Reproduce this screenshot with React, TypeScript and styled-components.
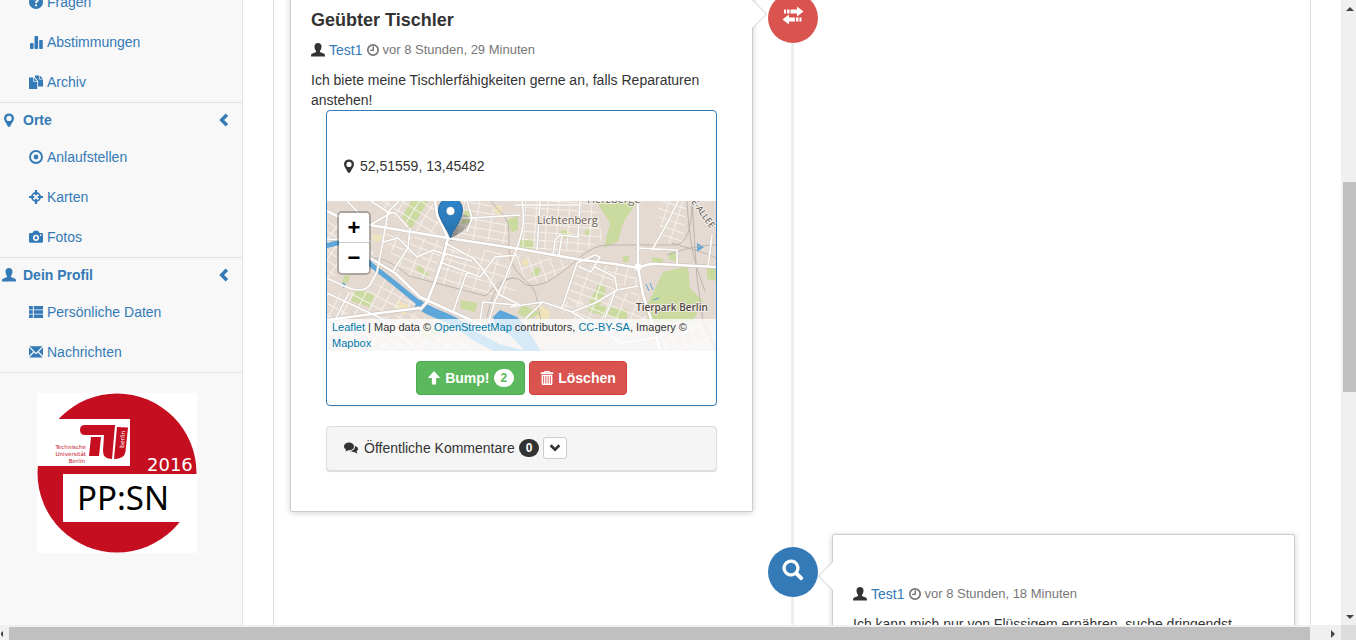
import React from 'react';
import styled, { createGlobalStyle, css } from 'styled-components';

const GlobalStyle = createGlobalStyle`
  *, *::before, *::after { box-sizing: border-box; }
  body {
    margin: 0;
    background: #fff;
    color: #333;
    font: 14px/20px "Liberation Sans", Arial, sans-serif;
  }
  a { color: #337ab7; text-decoration: none; }
  h4, p, ul { margin: 0; padding: 0; }
  ul { list-style: none; }
`;

/* ---------- icons ---------- */

type IconName =
  | 'question' | 'stats' | 'duplicate' | 'marker' | 'record' | 'screenshot' | 'camera' | 'user'
  | 'list' | 'envelope' | 'left' | 'down' | 'time' | 'up' | 'trash' | 'comments';

const glyphs: Record<IconName, React.ReactNode> = {
  question: (
    <path fillRule="evenodd" d="M7 0a7 7 0 1 1 0 14A7 7 0 0 1 7 0ZM4.4 5.2h2c0-.7.3-1 .8-1 .4 0 .7.2.7.6 0 .9-1.8 1.100-1.800 3.200h1.900c0-1.200 2-1.500 2-3.400C10 3 8.800 2.300 7.300 2.300c-1.800 0-2.900 1-2.900 2.900ZM6.100 9.200v2h1.900v-2Z" />
  ),
  stats: (
    <>
      <rect x="1" y="8" width="3.600" height="6" rx=".8" />
      <rect x="5.500" y="1" width="3.600" height="13" rx=".8" />
      <rect x="10.200" y="5" width="3.600" height="9" rx=".8" />
    </>
  ),
  duplicate: (
    <>
      <path d="M0 2.500h4.300v4.200h3.900V14H.5a.5.5 0 0 1-.5-.5Z" />
      <path d="M5.100 2.700 8 5.900H5.100Z" />
      <path d="M6 .5h3.900v4h4.100v7H9.100V5.700L6 2.300Z" />
      <path d="M10.700.5 14 3.700h-3.300Z" />
    </>
  ),
  marker: (
    <path fillRule="evenodd" d="M7 .4a5 5 0 0 1 5 5c0 2.600-2.500 4.600-3.300 7.200C8.400 13.500 7.700 13.900 7 13.900s-1.400-.4-1.700-1.300C4.500 10 2 8 2 5.400a5 5 0 0 1 5-5Zm0 2.400a2.600 2.600 0 1 0 0 5.200 2.600 2.600 0 0 0 0-5.200Z" />
  ),
  record: (
    <>
      <circle cx="7" cy="7" r="6" fill="none" stroke="currentColor" strokeWidth="1.900" />
      <circle cx="7" cy="7" r="2.400" />
    </>
  ),
  screenshot: (
    <>
      <circle cx="7" cy="7" r="4.100" fill="none" stroke="currentColor" strokeWidth="1.800" />
      <path d="M5.900 0h2.200v5.300H5.900ZM5.900 8.700h2.200V14H5.900ZM0 5.900h5.300v2.200H0ZM8.700 5.900H14v2.200H8.700Z" />
    </>
  ),
  camera: (
    <path fillRule="evenodd" d="M1.300 3.100h2L4.700 1.300Q5 .8 5.600.8h2.800q.6 0 .9.5l1.400 1.800h2q1.300 0 1.300 1.300v7.100q0 1.200-1.300 1.200H1.300Q0 12.700 0 11.500V4.400q0-1.300 1.300-1.300ZM7 4.700a3.100 3.100 0 1 0 0 6.200 3.100 3.100 0 0 0 0-6.200Zm0 1.600a1.500 1.500 0 1 1 0 3 1.500 1.500 0 0 1 0-3Zm4-1.700v1.300h1.300V4.600Z" />
  ),
  user: (
    <path d="M7 0c2.200 0 3.500 1.500 3.500 3.500 0 1.800-.6 3.300-1.500 4.200-.3.900.1 1.400 1 1.800l2.600 1.100c1 .4 1.400.9 1.400 2.900H0c0-2 .4-2.500 1.400-2.900L4 9.500c.9-.4 1.300-.9 1-1.800C4.100 6.800 3.500 5.300 3.500 3.500 3.500 1.500 4.800 0 7 0Z" />
  ),
  list: <path d="M0 1h3.800v3.400H0ZM4.800 1H14v3.400H4.800ZM0 5.300h3.800v3.400H0ZM4.800 5.300H14v3.400H4.800ZM0 9.600h3.800V13H0ZM4.800 9.600H14V13H4.800Z" />,
  envelope: (
    <path d="M.4 1.300h13.200L7 7.700ZM0 2.500l4.200 4.200L0 10.700ZM14 2.500v8.200L9.800 6.700ZM5.100 7.600 7 9.400l1.900-1.800 4.700 4.900H.4Z" />
  ),
  left: <path d="m9.600.4 2.500 2.500L8.100 7l4 4.100-2.500 2.500L3.300 7Z" />,
  down: <path d="m.8 4.900 2.200-2.200 4 4 4-4 2.200 2.200L7 11Z" />,
  time: (
    <>
      <circle cx="7" cy="7" r="5.200" fill="none" stroke="currentColor" strokeWidth="1.700" />
      <path d="M6.600 3.200h1.400V8H4V6.700h2.600Z" />
    </>
  ),
  up: <path d="m7 0 6.200 7H9.100v6.500H4.900V7H.8Z" />,
  trash: (
    <>
      <path fillRule="evenodd" d="M4 1.300Q4 0 5.200 0h3.600Q10 0 10 1.300h3.300v1.600H.7V1.300ZM5.200 1.300h3.600V.9H5.200Z" />
      <path fillRule="evenodd" d="M1.600 3.700h10.800V12.800q0 1.200-1.200 1.200H2.800q-1.200 0-1.200-1.200ZM3.200 4.900v7.500h.9V4.900ZM5.400 4.900v7.500h.9V4.900ZM7.700 4.900v7.500h.9V4.900ZM9.900 4.900v7.500h.9V4.900Z" />
    </>
  ),
  comments: (
    <>
      <path d="M5 1.600c3 0 5 1.700 5 3.900S8 9.300 5 9.300l-.8-.1C3.300 10 2.200 10.300 1.200 10.400c.5-.5.900-1.200.9-1.900C.8 7.800 0 6.800 0 5.500 0 3.300 2 1.600 5 1.600Z" />
      <path d="M11 5c1.800.3 3 1.500 3 3 0 .9-.6 1.700-1.500 2.300.1.800.5 1.400 1 1.900-1.200 0-2.300-.5-3-1.300-2 .2-3.900-.1-4.900-.8C9 10 11.200 8 11 5Z" />
    </>
  ),
};

const Glyph = styled.svg`
  flex: none;
  width: 14px;
  height: 14px;
  fill: currentColor;
`;

const Icon = ({ name }: { name: IconName }) => (
  <Glyph viewBox="0 0 14 14" aria-hidden="true">{glyphs[name]}</Glyph>
);

/* ---------- window frame ---------- */

const Window = styled.div`
  display: grid;
  grid-template: minmax(0, 1fr) 15px / minmax(0, 1fr) 15px;
  height: 100vh;
  overflow: hidden;
`;

const Viewport = styled.div`
  display: grid;
  grid-template-columns: 243px minmax(0, 1fr);
  overflow: hidden;
`;

const ScrollTrack = styled.div<{ $horizontal?: boolean }>`
  display: flex;
  flex-direction: ${p => (p.$horizontal ? 'row' : 'column')};
  padding: ${p => (p.$horizontal ? '2px 0 0' : '0 0 0 2px')};
  background: #f0f0f0;
`;

const ScrollPart = styled.div<{ $grow: number; $thumb?: boolean }>`
  flex: ${p => p.$grow} 1 0;
  background: ${p => (p.$thumb ? '#c0c0c0' : 'none')};
`;

const ScrollArrow = styled.div<{ $size: number }>`
  display: flex;
  flex: 0 0 ${p => p.$size}px;
  align-items: center;
  justify-content: center;
  overflow: hidden;
`;

const Triangle = styled.svg`
  flex: none;
  width: 8px;
  height: 8px;
  fill: #444;
`;

const Corner = styled.div`
  background: #dcdcdc;
`;

/* ---------- sidebar ---------- */

const Sidebar = styled.nav`
  border-right: 1px solid #e2e2e2;
  background: #f8f8f8;
  overflow: hidden;
`;

const SidebarScroll = styled.div`
  margin-top: -18px;
`;

const MenuGroup = styled.section`
  border-bottom: 1px solid #e2e2e2;
`;

const MenuHeading = styled.a`
  display: flex;
  align-items: center;
  gap: 7px;
  height: 34px;
  padding: 0 12px 0 2px;
  font-weight: bold;

  span { flex: 1; }
`;

const MenuLink = styled.a`
  display: flex;
  align-items: center;
  gap: 4px;
  height: 40px;
  padding-left: 29px;
`;

const Logo = styled.svg`
  display: block;
  width: 160px;
  height: 160px;
  margin: 20px 37px;
  background: #fff;
`;

type MenuItem = { icon: IconName; label: string };

const Menu = ({ icon, title, items }: { icon?: IconName; title?: string; items: MenuItem[] }) => (
  <MenuGroup>
    {icon && title && (
      <MenuHeading href="#">
        <Icon name={icon} />
        <span>{title}</span>
        <Icon name="left" />
      </MenuHeading>
    )}
    <ul>
      {items.map(item => (
        <li key={item.label}>
          <MenuLink href="#"><Icon name={item.icon} />{item.label}</MenuLink>
        </li>
      ))}
    </ul>
  </MenuGroup>
);

const ProjectLogo = () => (
  <Logo viewBox="0 0 160 160" role="img" aria-label="PP:SN 2016">
    <circle cx="80" cy="80" r="79.500" fill="#c50e1f" />
    <path fill="#fff" d="M0 26h93v47H0ZM26 81h134v48H26Z" />
    <g fill="#c50e1f">
      <path d="M48 32h30l-3 34q-9 0-9-8l1-16H48q-5 0-5-5t5-5Z" />
      <path d="M54 44h10l-2 19H52Z" />
      <path d="m80 34 11 .5-2.500 24Q87.500 66 77 66Z" />
      <g fontFamily="DejaVu Sans, sans-serif" fontSize="5.600" textAnchor="end">
        <text x="49" y="56">Technische</text>
        <text x="49" y="63">Universität</text>
        <text x="48" y="70">Berlin</text>
      </g>
    </g>
    <text transform="translate(87 55) rotate(-86)" fill="#fff" fontFamily="DejaVu Sans, sans-serif" fontSize="6">berlin</text>
    <text x="110" y="78" fill="#fff" fontFamily="DejaVu Sans, sans-serif" fontSize="18">2016</text>
    <text x="40" y="117" fill="#000" fontFamily="Noto Sans, Open Sans, sans-serif" fontSize="33">PP:SN</text>
  </Logo>
);

/* ---------- timeline ---------- */

const Main = styled.main`
  padding: 0 30px;
  overflow: hidden;
`;

const Frame = styled.div`
  display: flow-root;
  height: 100%;
  padding: 0 15px 0 16px;
  border: solid #ddd;
  border-width: 0 1px;
`;

const Timeline = styled.ul`
  margin-top: -10px;
  min-height: calc(100% + 10px);
  background: linear-gradient(#eee, #eee) center / 3px 100% no-repeat;
`;

const Entry = styled.li`
  display: grid;
  grid-template-columns: minmax(0, 1fr) 79px minmax(0, 1fr);
  align-items: start;
  margin-bottom: 22px;
`;

const Badge = styled.div<{ $color: string; $top: number }>`
  display: flex;
  grid-column: 2;
  grid-row: 1;
  align-items: center;
  justify-content: center;
  justify-self: center;
  width: 50px;
  height: 50px;
  margin-top: ${p => p.$top}px;
  padding-bottom: 4px;
  border-radius: 50%;
  background: ${p => p.$color};

  svg { width: 22px; height: 22px; fill: #fff; }
`;

const arrow = (side: 'left' | 'right', size: number, color: string, center: number) => css`
  content: '';
  position: absolute;
  top: ${center - size}px;
  ${side}: -${size}px;
  border: solid transparent;
  border-width: ${size}px 0;
  border-${side === 'left' ? 'right' : 'left'}: ${size}px solid ${color};
`;

const Card = styled.article<{ $side: 'left' | 'right'; $arrow: number }>`
  position: relative;
  grid-column: ${p => (p.$side === 'left' ? 1 : 3)};
  grid-row: 1;
  padding: 20px;
  border: 1px solid #ccc;
  border-radius: 2px;
  background: #fff;
  box-shadow: 0 1px 6px rgba(0, 0, 0, 0.18);

  &::before { ${p => arrow(p.$side === 'left' ? 'right' : 'left', 15, '#ccc', p.$arrow)} }
  &::after { ${p => arrow(p.$side === 'left' ? 'right' : 'left', 14, '#fff', p.$arrow)} }
`;

const Title = styled.h4`
  min-height: 19px;
  margin-bottom: 10px;
  font-size: 18px;
  line-height: 19px;
`;

const Meta = styled.p`
  display: flex;
  align-items: center;
  gap: 4px;
  margin-bottom: 10px;
`;

const Time = styled.small`
  display: flex;
  align-items: center;
  gap: 2px;
  color: #777;
  font-size: 13px;
`;

const Panel = styled.section<{ $tone: 'primary' | 'muted' }>`
  margin: 0 15px 20px;
  border: 1px solid ${p => (p.$tone === 'primary' ? '#337ab7' : '#ddd')};
  border-radius: 4px;
  background: ${p => (p.$tone === 'primary' ? '#fff' : '#f5f5f5')};
  box-shadow: 0 1px 1px rgba(0, 0, 0, ${p => (p.$tone === 'primary' ? 0.05 : 0.15)});
`;

const Location = styled.p`
  display: flex;
  align-items: center;
  gap: 4px;
  padding: 45px 15px 25px;
`;

const Actions = styled.div`
  display: flex;
  justify-content: center;
  gap: 4px;
  padding: 10px;
`;

const ActionButton = styled.button<{ $tone: 'success' | 'danger' }>`
  display: flex;
  align-items: center;
  gap: 4px;
  height: 34px;
  padding: 0 10px;
  border: 1px solid ${p => (p.$tone === 'success' ? '#4cae4c' : '#d43f3a')};
  border-radius: 4px;
  background: ${p => (p.$tone === 'success' ? '#5cb85c' : '#d9534f')};
  color: #fff;
  font: bold 14px/20px "Liberation Sans", Arial, sans-serif;
`;

const Count = styled.span<{ $color: string; $background: string }>`
  padding: 3px 7px;
  border-radius: 10px;
  background: ${p => p.$background};
  color: ${p => p.$color};
  font-size: 12px;
  font-weight: bold;
  line-height: 12px;
`;

const CommentsBar = styled.div`
  display: flex;
  align-items: center;
  gap: 4px;
  padding: 10px 17px 11px;

  & > svg { margin-right: 2px; }
`;

const ToggleButton = styled.button`
  display: flex;
  align-items: center;
  justify-content: center;
  width: 24px;
  height: 22px;
  padding: 0;
  border: 1px solid #ccc;
  border-radius: 3px;
  background: #fff;
  color: #333;

  svg { width: 12px; height: 12px; }
`;

/* ---------- map ---------- */

const Map = styled.div`
  position: relative;
  height: 150px;
  overflow: hidden;
`;

const MapDrawing = styled.svg`
  display: block;
  width: 100%;
  height: 100%;
`;

const ZoomControl = styled.div`
  position: absolute;
  top: 10px;
  left: 10px;
  border: 2px solid rgba(0, 0, 0, 0.25);
  border-radius: 5px;
  background-clip: padding-box;
`;

const ZoomButton = styled.button`
  display: block;
  width: 30px;
  height: 30px;
  padding: 0;
  border: 0;
  background: #fff;
  color: #000;
  font: bold 22px/30px "Liberation Sans", Arial, sans-serif;

  &:first-child { border-bottom: 1px solid #ccc; border-radius: 3px 3px 0 0; }
  &:last-child { border-radius: 0 0 3px 3px; }
`;

const Attribution = styled.div`
  position: absolute;
  right: 0;
  bottom: 0;
  left: 0;
  padding: 0 5px;
  background: rgba(255, 255, 255, 0.75);
  font-size: 11px;
  line-height: 16px;

  a { color: #0078a8; }
`;

const streetBlocks = [
  { angle: 35, points: '0,20 42,26 50,70 0,76' },
  { angle: 32, points: '48,0 106,0 118,36 84,30' },
  { angle: 10, points: '126,0 160,0 182,24 182,44 126,36' },
  { angle: 28, points: '0,92 46,90 60,74 92,108 52,112 0,118' },
  { angle: 22, points: '58,32 118,40 104,82 70,70' },
  { angle: 17, points: '120,44 180,52 190,98 104,82' },
  { angle: 4, points: '198,0 252,0 270,4 276,38 255,52 194,46' },
  { angle: 70, points: '186,54 248,60 222,80 200,82' },
  { angle: 20, points: '252,66 288,78 288,90 244,108 236,106' },
  { angle: 14, points: '254,60 310,68 310,84 290,84' },
  { angle: 18, points: '330,0 360,0 356,44 335,40' },
  { angle: 68, points: '332,120 389,124 389,150 336,150' },
  { angle: 30, points: '0,122 90,112 150,150 0,150' },
  { angle: 22, points: '216,104 310,90 322,122 296,140' },
];

const parks = [
  'M84 0H101L94 12 84 28 75 16Z', 'M138 9l8 3-2 9-10 2Z', 'M179 19l12-4v14l-6 2Z', 'M28 88l20 6-6 12-18-6Z',
  'M133 99l18 3-3 9-14-3Z', 'M269 0H311L297 20 291 40 277 47 283 22Z',
  'M336 71 361 65 363 87 376 100 366 120 322 121 318 108 328 88Z',
  'M271 84l8 2-3 14-12 12-4-6Z', 'M193 39l12-2 2 7-3 6-11-2Z', 'M325 56l12 2-3 5-9-2Z', 'M234 29l6 1v7h-6Z',
  'M262 103l38 6v10l-38-8Z', 'M343 51l7 1v9l-9-3Z', 'M92 64l10 10-2 2-11-8Z', 'M17 75l6-1-2 8h-6Z', 'M209 66l5 2-4 8-6-3Z',
  'M296 55h6v6h-6Z', 'M258 29h5v6h-5Z', 'M380 66l9 2v12l-9-2Z', 'M196 104l18 8-12 6-12-6Z', 'M100 124l12 5-8 10-10-4Z',
];

const smallRoads =
  'M56 41 71 37 81 47M83 27 81 47 90 56 106 49 120 54M118 42 146 57 155 67 173 94 193 104M113 61 153 76 168 56 190 54' +
  'M140 71 126 111M140 31 145 17 193 14M128 17H145L140 0M61 11 44 0M81 26 68 12 61 11 76-4M156 101 152 126M156 101 190 104' +
  'M195 0C198 18 196 30 190 47L178 78 168 100 160 126M116 52 145 60M81 47 66 70M0 77C18 86 34 95 43 84L50 71 56 40 61 11' +
  'M22 92 8 119M0 38 44 40M20 0 43 24 64 12M0 92 60 120 90 150M183 106 216 101 245 111 295 142 333 136M198 118 216 101' +
  'M226 54 228 39 233 34 251 36 253 0M232 54 235 34M188 4H253M210 49 213 0M250 62 235 107' +
  'M250 62 268 54 273 56 264 71 251 65M268 66 288 76 290 89 311 85M290 89 268 102 245 111M288 91 278 117' +
  'M325 49 341 21 351 0M311 47 350 49 350 64M385 34 381 66';

const mainRoads =
  'M0 10 20 20 43 24 121 37 193 48 255 59 288 63 311 67Q322 62 331 63L389 66M108-2 110 14 121 37 116 57 108 81 100 101 93 109' +
  'M43 57 68 72 93 96 126 111 160 126M0 119 53 112 93 107M311 0V66L316 94 325 121 333 149';

const railways =
  'M42 57C58 57 66 62 82 75L109 82 159 95C166 86 176 77 186 77Q192 77 199 84C219 88 236 70 252 57Q266 44 282 44H348Q365 43 365 0' +
  'M164 0C172 12 182 14 182 32S180 62 196 77 208 92 214 120M365 0 370 77 376 120 389 150M360 0C362 36 366 60 378 90' +
  'M340 54C362 46 376 44 389 44M345 42C364 48 380 52 389 57M186 77C168 80 164 100 160 116';

const CityMap = () => (
  <MapDrawing viewBox="0 0 389 150" preserveAspectRatio="xMidYMid slice" role="img" aria-label="Karte von Berlin-Lichtenberg">
    <defs>
      {streetBlocks.map((b, i) => (
        <pattern key={i} id={`streets-${i}`} width={11 + (i % 3) * 2} height={8 + (i % 2) * 2} patternUnits="userSpaceOnUse" patternTransform={`rotate(${b.angle})`}>
          <path d="M0 .5H20M.5 0V20" stroke="#f6f1ec" strokeWidth="1" fill="none" />
        </pattern>
      ))}
      <linearGradient id="pin" x1="0" y1="0" x2="0" y2="1">
        <stop offset="0" stopColor="#2e86cc" />
        <stop offset="1" stopColor="#2a72ad" />
      </linearGradient>
      <linearGradient id="shade" x1="0" y1="1" x2="1" y2="0">
        <stop offset="0" stopColor="#000" stopOpacity=".45" />
        <stop offset="1" stopColor="#000" stopOpacity=".1" />
      </linearGradient>
    </defs>
    <rect width="389" height="150" fill="#e4dad2" />
    <path fill="#efe3bb" d="M46 33l10 2-4 6-7-2ZM70 100l12 4-4 10-11-4ZM168 4l8 2-2 8-7-2ZM50 60l7 3-3 5-6-3ZM212 103l12 8-5 12-10-6ZM238 29l6 2-2 5-6-2ZM196 58l6 1-1 6-6-1Z" />
    {parks.map(d => <path key={d} d={d} fill="#cbda9f" />)}
    {streetBlocks.map((b, i) => <polygon key={i} points={b.points} fill={`url(#streets-${i})`} />)}
    <g fill="none" stroke="#5ca6d9">
      <path strokeWidth="5" d="M-2 45 14 41 28 45 43 63 66 81 93 103" />
      <path strokeWidth="9" d="M90 102C104 113 117 114 130 122L146 134 170 147 200 155" />
      <path strokeWidth="1" d="M319 83l3 7M323 82l3 7M326 99l6-2" />
    </g>
    <path fill="#5ca6d9" d="M166 116 173 109 190 116 200 128 215 152H200L182 133 168 124ZM370 42l7 4-7 5ZM14 84a2.500 2.500 0 1 1 2.500 3Z" />
    <path d={railways} fill="none" stroke="#bcb5b0" strokeWidth="1" />
    <g fill="none" strokeLinejoin="round">
      <path d={smallRoads} stroke="#d3c9c1" strokeWidth="2.600" />
      <path d={mainRoads} stroke="#cdc3bb" strokeWidth="3.800" />
      <path d={smallRoads} stroke="#fff" strokeWidth="1.600" />
      <path d={mainRoads} stroke="#fff" strokeWidth="2.600" />
    </g>
    <circle cx="311" cy="66" r="3.500" fill="#fff" />
    <g fontFamily="Open Sans, Noto Sans, sans-serif" fontSize="11" stroke="#f4eee8" strokeWidth="2" paintOrder="stroke" strokeLinejoin="round">
      <text x="210" y="23" fill="#655d57">Lichtenberg</text>
      <text x="260" y="2" fill="#655d57">Herzberge</text>
      <text x="309" y="110" fill="#4e4843" fontWeight="600" fontSize="10">Tierpark Berlin</text>
      <text transform="translate(364 1) rotate(54)" fill="#4e4843" fontSize="9">E-ALLEE</text>
    </g>
    <path d="M124 37 135 13Q145 14 143 21 139 30 124 37Z" fill="url(#shade)" />
    <path d="M123.500 37C121 29 111.500 18 111.500 9A12 12.500 0 0 1 135.500 9C135.500 18 126 29 123.500 37Z" fill="url(#pin)" stroke="#2367a0" />
    <circle cx="123.500" cy="10" r="4.500" fill="#fff" stroke="#2670ab" strokeWidth=".8" />
  </MapDrawing>
);

const Author = ({ age }: { age: string }) => (
  <Meta>
    <Icon name="user" />
    <a href="#">Test1</a>
    <Time><Icon name="time" />{age}</Time>
  </Meta>
);

export default function App() {
  return (
    <>
      <GlobalStyle />
      <Window>
        <Viewport>
          <Sidebar>
            <SidebarScroll>
              <Menu
                items={[
                  { icon: 'question', label: 'Fragen' },
                  { icon: 'stats', label: 'Abstimmungen' },
                  { icon: 'duplicate', label: 'Archiv' },
                ]}
              />
              <Menu
                icon="marker"
                title="Orte"
                items={[
                  { icon: 'record', label: 'Anlaufstellen' },
                  { icon: 'screenshot', label: 'Karten' },
                  { icon: 'camera', label: 'Fotos' },
                ]}
              />
              <Menu
                icon="user"
                title="Dein Profil"
                items={[
                  { icon: 'list', label: 'Persönliche Daten' },
                  { icon: 'envelope', label: 'Nachrichten' },
                ]}
              />
              <ProjectLogo />
            </SidebarScroll>
          </Sidebar>
          <Main>
            <Frame>
              <Timeline>
                <Entry>
                  <Card $side="left" $arrow={23}>
                    <Title>Geübter Tischler</Title>
                    <Author age="vor 8 Stunden, 29 Minuten" />
                    <p>Ich biete meine Tischlerfähigkeiten gerne an, falls Reparaturen anstehen!</p>
                    <Panel $tone="primary">
                      <Location><Icon name="marker" />52,51559, 13,45482</Location>
                      <Map>
                        <CityMap />
                        <ZoomControl>
                          <ZoomButton aria-label="Vergrößern">+</ZoomButton>
                          <ZoomButton aria-label="Verkleinern">−</ZoomButton>
                        </ZoomControl>
                        <Attribution>
                          <a href="#">Leaflet</a> | Map data © <a href="#">OpenStreetMap</a> contributors, <a href="#">CC-BY-SA</a>, Imagery © <a href="#">Mapbox</a>
                        </Attribution>
                      </Map>
                      <Actions>
                        <ActionButton $tone="success">
                          <Icon name="up" />Bump! <Count $color="#5cb85c" $background="#fff">2</Count>
                        </ActionButton>
                        <ActionButton $tone="danger"><Icon name="trash" />Löschen</ActionButton>
                      </Actions>
                    </Panel>
                    <Panel $tone="muted">
                      <CommentsBar>
                        <Icon name="comments" />
                        Öffentliche Kommentare
                        <Count $color="#fff" $background="#333">0</Count>
                        <ToggleButton aria-label="Kommentare anzeigen"><Icon name="down" /></ToggleButton>
                      </CommentsBar>
                    </Panel>
                  </Card>
                  <Badge $color="#d9534f" $top={3}>
                    <svg viewBox="0 0 22 22" aria-hidden="true">
                      <path d="M2 4.500h2v4H2ZM5 4.500h2.500v4H5ZM8.500 4.500H15v-3L21.500 6.500l-6.500 5v-3H8.500ZM7 9.500v3h6v4H7v3L.5 14.500ZM14 12.500h2.500v4H14ZM17.500 12.500h2v4h-2Z" />
                    </svg>
                  </Badge>
                </Entry>
                <Entry>
                  <Badge $color="#337ab7" $top={13}>
                    <svg viewBox="0 0 22 22" aria-hidden="true">
                      <path fillRule="evenodd" d="M9 .5a8.500 8.500 0 0 1 7.200 13l4.600 4.500q1 1.200 0 2.100l-.7.700q-1 1-2.100 0l-4.500-4.600A8.500 8.500 0 1 1 9 .5Zm0 3.200a5.300 5.300 0 1 0 0 10.600A5.300 5.300 0 0 0 9 3.700Z" />
                    </svg>
                  </Badge>
                  <Card $side="right" $arrow={41}>
                    <Title />
                    <Author age="vor 8 Stunden, 18 Minuten" />
                    <p>Ich kann mich nur von Flüssigem ernähren, suche dringendst</p>
                  </Card>
                </Entry>
              </Timeline>
            </Frame>
          </Main>
        </Viewport>
        <ScrollTrack aria-hidden="true">
          <ScrollArrow $size={17}><Triangle viewBox="0 0 8 8"><path d="M0 6 4 2l4 4Z" /></Triangle></ScrollArrow>
          <ScrollPart $grow={165} />
          <ScrollPart $grow={210} $thumb />
          <ScrollPart $grow={216} />
          <ScrollArrow $size={17}><Triangle viewBox="0 0 8 8"><path d="M0 2h8L4 6Z" /></Triangle></ScrollArrow>
        </ScrollTrack>
        <ScrollTrack $horizontal aria-hidden="true">
          <ScrollArrow $size={9}><Triangle viewBox="0 0 8 8"><path d="M2 1v6L0 5V3Z" /></Triangle></ScrollArrow>
          <ScrollPart $grow={1301} $thumb />
          <ScrollPart $grow={14} />
          <ScrollArrow $size={17}><Triangle viewBox="0 0 8 8"><path d="M2 0v8L6 4Z" /></Triangle></ScrollArrow>
        </ScrollTrack>
        <Corner />
      </Window>
    </>
  );
}
